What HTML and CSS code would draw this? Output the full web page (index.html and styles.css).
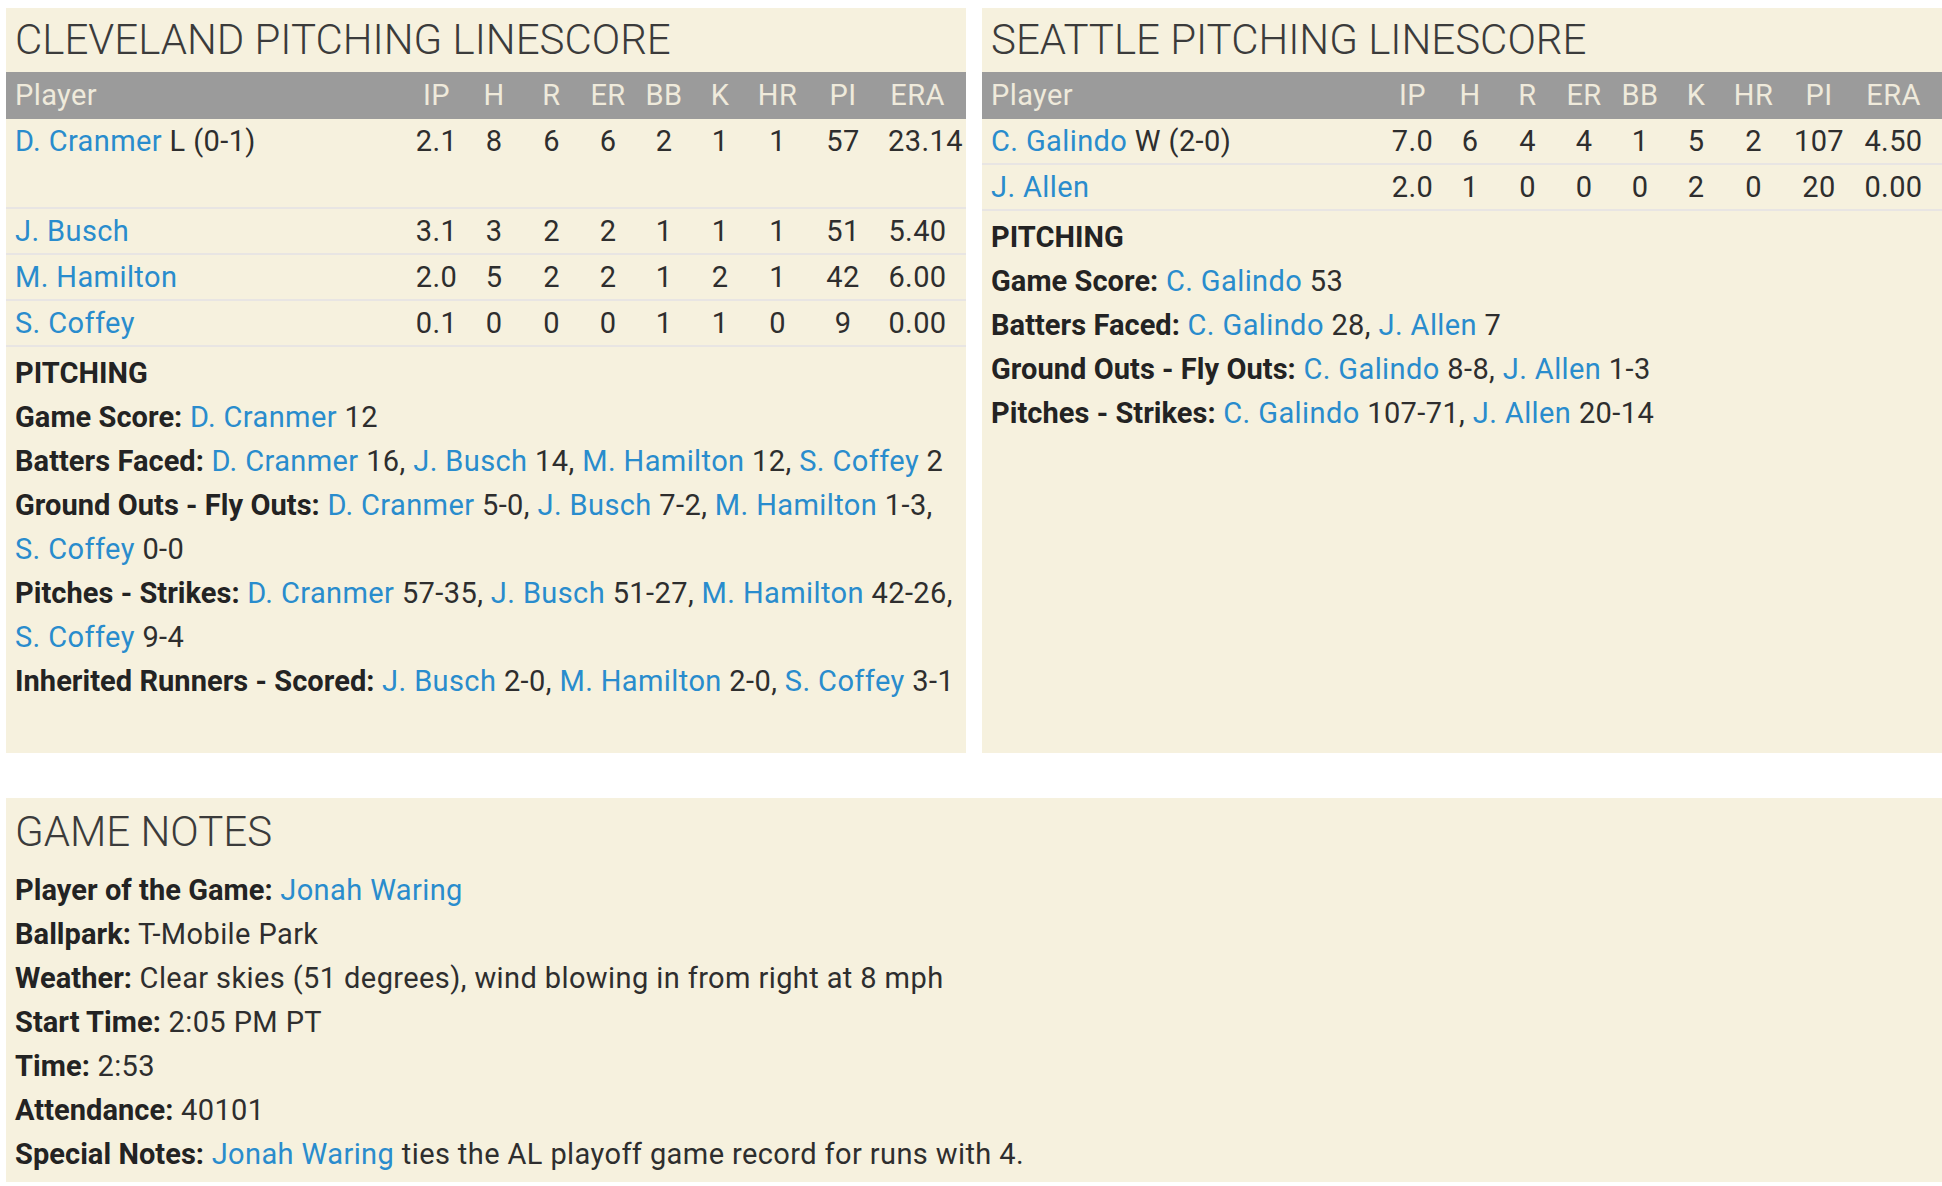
FILE: index.html
```html
<!DOCTYPE html>
<html lang="en">
<head>
    <meta charset="utf-8" />
    <title>Box Score - Pitching</title>
    <link rel="stylesheet" href="styles.css">
</head>
<body>

<!-- pitching linescores -->
<div class="linescores">
    <div class="panel">
        <h2 class="panel-title">CLEVELAND PITCHING LINESCORE</h2>
        <table class="pitching">
            <thead>
                <tr><th class="player">Player</th><th>IP</th><th>H</th><th>R</th><th>ER</th><th>BB</th><th>K</th><th>HR</th><th>PI</th><th>ERA</th></tr>
            </thead>
            <tbody>
                <tr class="decision"><td class="player"><a href="#">D. Cranmer</a> L (0-1)</td><td>2.1</td><td>8</td><td>6</td><td>6</td><td>2</td><td>1</td><td>1</td><td>57</td><td>23.14</td></tr>
                <tr><td class="player"><a href="#">J. Busch</a></td><td>3.1</td><td>3</td><td>2</td><td>2</td><td>1</td><td>1</td><td>1</td><td>51</td><td>5.40</td></tr>
                <tr><td class="player"><a href="#">M. Hamilton</a></td><td>2.0</td><td>5</td><td>2</td><td>2</td><td>1</td><td>2</td><td>1</td><td>42</td><td>6.00</td></tr>
                <tr><td class="player"><a href="#">S. Coffey</a></td><td>0.1</td><td>0</td><td>0</td><td>0</td><td>1</td><td>1</td><td>0</td><td>9</td><td>0.00</td></tr>
            </tbody>
        </table>
        <div class="notes">
            <div class="notes-title">PITCHING</div>
            <div><b>Game Score:</b> <a href="#">D. Cranmer</a> 12</div>
            <div><b>Batters Faced:</b> <a href="#">D. Cranmer</a> 16, <a href="#">J. Busch</a> 14, <a href="#">M. Hamilton</a> 12, <a href="#">S. Coffey</a> 2</div>
            <div><b>Ground Outs - Fly Outs:</b> <a href="#">D. Cranmer</a> <span>5-0</span>, <a href="#">J. Busch</a> <span>7-2</span>, <a href="#">M. Hamilton</a> <span>1-3</span>, <a href="#">S. Coffey</a> <span>0-0</span></div>
            <div><b>Pitches - Strikes:</b> <a href="#">D. Cranmer</a> <span>57-35</span>, <a href="#">J. Busch</a> <span>51-27</span>, <a href="#">M. Hamilton</a> <span>42-26</span>, <a href="#">S. Coffey</a> <span>9-4</span></div>
            <div><b>Inherited Runners - Scored:</b> <a href="#">J. Busch</a> <span>2-0</span>, <a href="#">M. Hamilton</a> <span>2-0</span>, <a href="#">S. Coffey</a> <span>3-1</span></div>
        </div>
    </div>

    <div class="panel">
        <h2 class="panel-title">SEATTLE PITCHING LINESCORE</h2>
        <table class="pitching">
            <thead>
                <tr><th class="player">Player</th><th>IP</th><th>H</th><th>R</th><th>ER</th><th>BB</th><th>K</th><th>HR</th><th>PI</th><th>ERA</th></tr>
            </thead>
            <tbody>
                <tr><td class="player"><a href="#">C. Galindo</a> W (2-0)</td><td>7.0</td><td>6</td><td>4</td><td>4</td><td>1</td><td>5</td><td>2</td><td>107</td><td>4.50</td></tr>
                <tr><td class="player"><a href="#">J. Allen</a></td><td>2.0</td><td>1</td><td>0</td><td>0</td><td>0</td><td>2</td><td>0</td><td>20</td><td>0.00</td></tr>
            </tbody>
        </table>
        <div class="notes">
            <div class="notes-title">PITCHING</div>
            <div><b>Game Score:</b> <a href="#">C. Galindo</a> 53</div>
            <div><b>Batters Faced:</b> <a href="#">C. Galindo</a> 28, <a href="#">J. Allen</a> 7</div>
            <div><b>Ground Outs - Fly Outs:</b> <a href="#">C. Galindo</a> <span>8-8</span>, <a href="#">J. Allen</a> <span>1-3</span></div>
            <div><b>Pitches - Strikes:</b> <a href="#">C. Galindo</a> <span>107-71</span>, <a href="#">J. Allen</a> <span>20-14</span></div>
        </div>
    </div>
</div>

<!-- game notes -->
<div class="panel game-notes">
    <h2 class="panel-title">GAME NOTES</h2>
    <div class="notes">
        <div><b>Player of the Game:</b> <a href="#">Jonah Waring</a></div>
        <div><b>Ballpark:</b> T-Mobile Park</div>
        <div><b>Weather:</b> Clear skies (51 degrees), wind blowing in from right at 8 mph</div>
        <div><b>Start Time:</b> 2:05 PM PT</div>
        <div><b>Time:</b> 2:53</div>
        <div><b>Attendance:</b> 40101</div>
        <div><b>Special Notes:</b> <a href="#">Jonah Waring</a> ties the AL playoff game record for runs with 4.</div>
    </div>
</div>

</body>
</html>
```

FILE: styles.css
```css
body { margin: 0; padding: 8px 0 0 6px; background: #fff; font-family: Roboto, "Liberation Sans", sans-serif; font-size: 29px; letter-spacing: 0.4px; color: #2e2e2e; overflow: hidden; }
a { color: #298ccd; text-decoration: none; white-space: nowrap; }

.linescores { display: flex; gap: 16px; }
.panel { background: #f6f1de; width: 960px; }
.panel-title { margin: 0; padding-left: 9px; font-size: 42px; font-weight: 300; letter-spacing: 0; line-height: 64px; color: #3b3b3b; }

.pitching { width: 100%; table-layout: fixed; border-collapse: separate; border-spacing: 0; }
.pitching th { box-sizing: border-box; padding: 0; background: #9b9b9b; color: #efeadb; font-weight: 400; line-height: 47px; text-align: center; }
.pitching td { padding: 0; line-height: 44px; border-bottom: 2px solid #e8e5e3; text-align: center; white-space: nowrap; }
.pitching .player { text-align: left; padding-left: 9px; }
.pitching tr.decision td { height: 88px; vertical-align: top; }

.pitching th:nth-child(2) { width: 57px; }
.pitching th:nth-child(3) { width: 58px; }
.pitching th:nth-child(4) { width: 57px; }
.pitching th:nth-child(5),
.pitching th:nth-child(6),
.pitching th:nth-child(7) { width: 56px; }
.pitching th:nth-child(8) { width: 59px; }
.pitching th:nth-child(9) { width: 72px; }
.pitching th:nth-child(10) { width: 87px; }
.pitching th:nth-child(10),
.pitching td:nth-child(10) { padding: 0 19px 0 9px; }

.notes { padding: 4px 2px 50px 9px; line-height: 44px; }
.notes span { white-space: nowrap; }
.notes b, .notes-title { font-weight: 700; letter-spacing: 0.05px; color: #232323; }

.game-notes { width: 1936px; margin-top: 45px; padding: 2px 0 6px; }
.game-notes .notes { padding-bottom: 0; }
```
